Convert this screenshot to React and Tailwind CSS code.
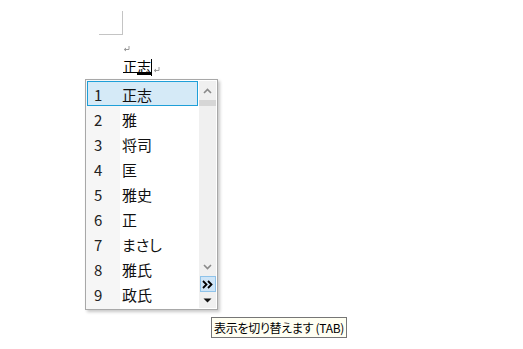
import React from "react";

const candidates = ["正志", "雅", "将司", "匡", "雅史", "正", "まさし", "雅氏", "政氏"];

const jp = { fontFamily: '"Noto Sans CJK JP", "Noto Sans", sans-serif' };

const ChevronUp = () => (
  <svg width="9" height="6" viewBox="0 0 9 6">
    <path d="M1 5 L4.5 1.5 L8 5" fill="none" stroke="#8a8a8a" strokeWidth="1.6" />
  </svg>
);

const ChevronDown = () => (
  <svg width="9" height="6" viewBox="0 0 9 6">
    <path d="M1 1 L4.5 4.5 L8 1" fill="none" stroke="#8a8a8a" strokeWidth="1.6" />
  </svg>
);

const DoubleRight = () => (
  <svg width="11" height="9" viewBox="0 0 11 9">
    <path d="M1 1 L4.5 4.5 L1 8 M6 1 L9.5 4.5 L6 8" fill="none" stroke="#000" strokeWidth="1.8" />
  </svg>
);

const TriangleDown = () => (
  <svg width="9" height="5" viewBox="0 0 9 5">
    <path d="M0.5 0.5 L8.5 0.5 L4.5 4.5 Z" fill="#111" />
  </svg>
);

const ParaMark = () => (
  <svg width="7" height="6" viewBox="0 0 7 6">
    <path d="M6 0 L6 3.5 L1.5 3.5 M3 2 L1.2 3.5 L3 5" fill="none" stroke="#9a9a9a" strokeWidth="1" />
  </svg>
);

export default function App() {
  return (
    <div className="relative w-[523px] h-[349px] bg-white overflow-hidden" style={jp}>
      {/* page corner mark */}
      <div className="ml-[99px] pt-[11px]">
        <div className="w-[24px] h-[24px] border-r border-b border-[#c4c4c4]" />
      </div>

      {/* empty paragraph */}
      <div className="ml-[123px] mt-[11px] h-[8px] flex items-start">
        <ParaMark />
      </div>

      {/* composing text */}
      <div className="ml-[123px] mt-[5px] flex items-start h-[18px]">
        <div className="flex flex-col">
          <div className="h-[14px] text-[14px] leading-[14px] text-black whitespace-nowrap">正志</div>
          <div className="mt-[-1px] flex">
            <div className="w-[14px] h-px bg-black" />
            <div className="w-[14px] h-[3px] bg-black" />
          </div>
        </div>
        <div className="w-px h-[17px] bg-black" />
        <div className="mt-[8px] ml-px">
          <ParaMark />
        </div>
      </div>

      {/* candidate window */}
      <div className="absolute left-[85px] top-[79px] w-[133px] h-[231px] border border-[#a8a8a8] bg-white shadow-[2px_2px_3px_rgba(0,0,0,0.22)] flex">
        <div className="relative w-[113px] py-[1px]">
          <div className="absolute left-0 top-0 bottom-0 w-[34px] bg-[#f6f6f6]" />
          <div className="relative flex flex-col">
            {candidates.map((c, i) => (
              <div
                key={i}
                className={
                  i === 0
                    ? "mx-[1px] h-[25px] flex items-center border border-[#1e9fd8] bg-[#d5eaf7]"
                    : "mx-[1px] h-[25px] flex items-center border border-transparent"
                }
              >
                <span className="w-[34px] pl-[6px] pt-[2px] text-[15px] leading-none text-[#222]">{i + 1}</span>
                <span className="pt-[2px] text-[15px] leading-none text-[#111] [font-feature-settings:'palt']">{c}</span>
              </div>
            ))}
          </div>
        </div>
        <div className="w-[17px] my-[1px] bg-[#f0f0f0] flex flex-col items-center">
          <div className="h-[16px] mt-[2px] flex items-center">
            <ChevronUp />
          </div>
          <div className="w-full h-[6px] mt-[1px] bg-[#d6d6d6]" />
          <div className="flex-1" />
          <div className="h-[10px] flex items-center mb-[4px]">
            <ChevronDown />
          </div>
          <div className="w-[16px] h-[16px] border border-[#8fc3ea] bg-[#cfe5f7] flex items-center justify-center">
            <DoubleRight />
          </div>
          <div className="h-[16px] flex items-center">
            <TriangleDown />
          </div>
        </div>
      </div>

      {/* tooltip */}
      <div className="absolute left-[211px] top-[317px] h-[21px] px-[2px] border border-[#767676] bg-[#fffff2] flex items-center text-[12px] leading-none text-black whitespace-nowrap tracking-[-0.3px] [font-feature-settings:'palt']">
        表示を切り替えます (TAB)
      </div>
    </div>
  );
}
